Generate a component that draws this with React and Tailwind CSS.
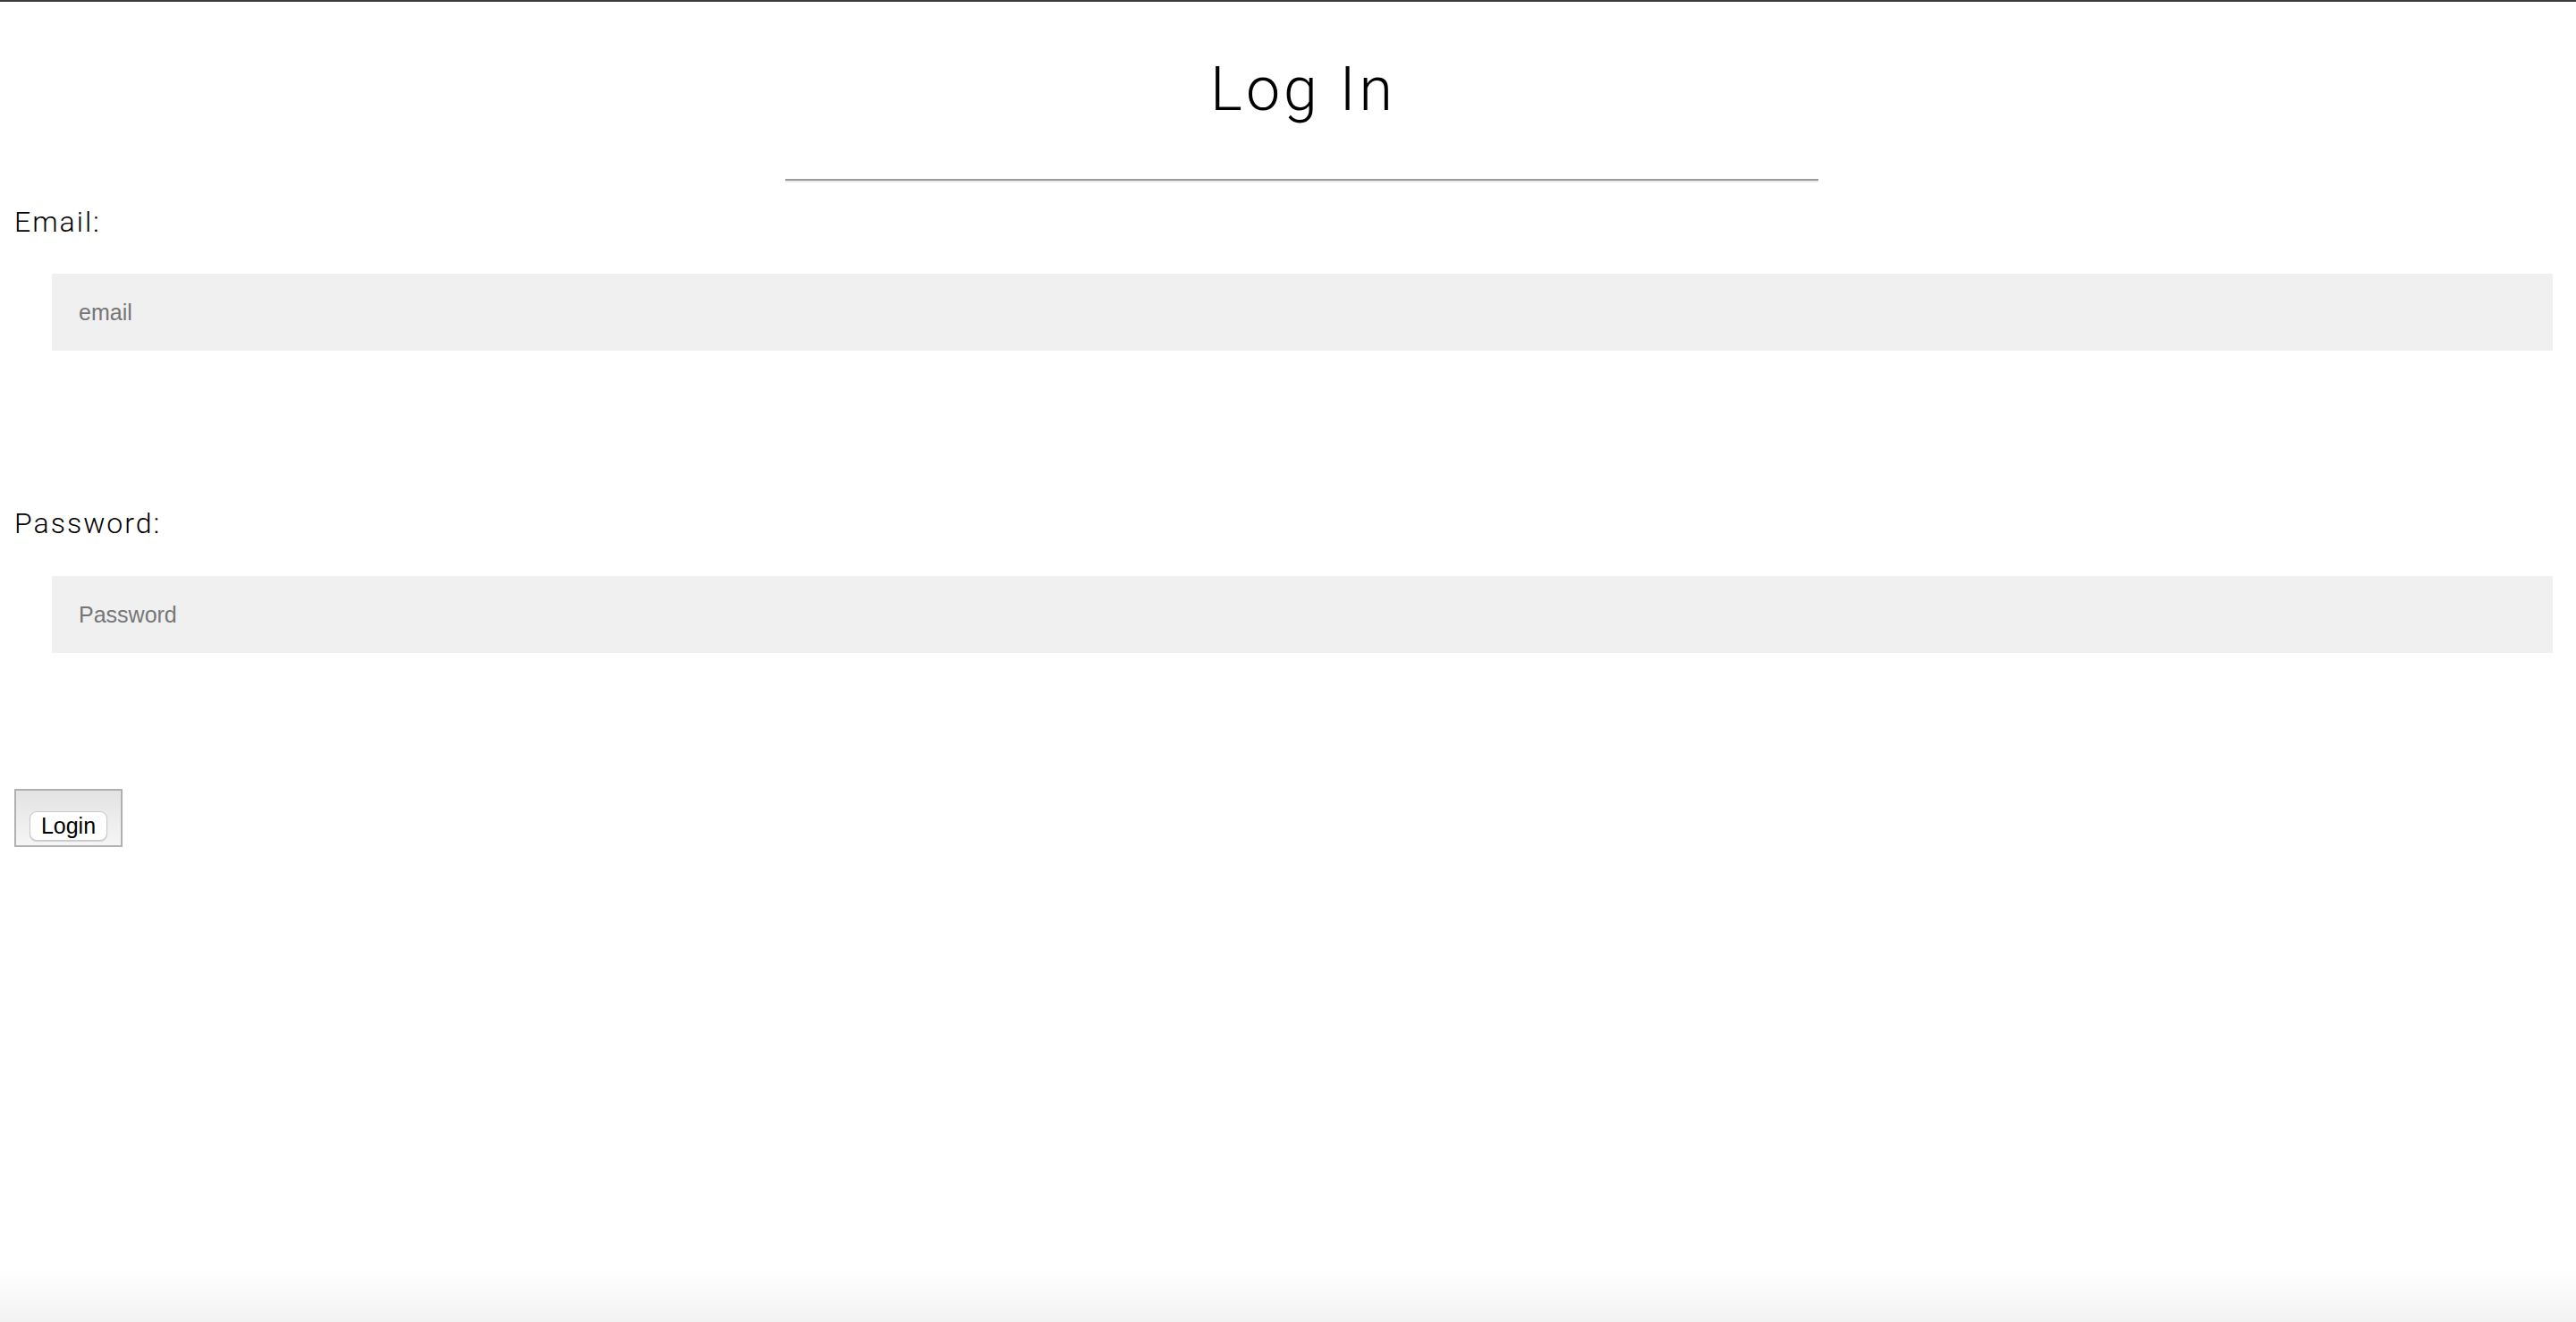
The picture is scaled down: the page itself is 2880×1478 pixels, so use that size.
export default function App() {
  return (
    <div className="min-h-[1478px] flex flex-col bg-white">
      {/* top rule */}
      <div className="h-[2px] bg-[#3c3c3c]" />

      <div className="pl-[30px] flex flex-col">
        <h1
          className="mt-[58px] pl-[4px] text-center text-[68px] leading-[80px] font-light tracking-[4px] text-black"
          style={{ fontFamily: "Roboto, 'Liberation Sans', sans-serif" }}
        >
          Log In
        </h1>

        <hr className="mt-[60px] w-[1155px] mx-auto border-0 border-t-2 border-b-2 border-t-[#9a9a9a] border-b-[#ececec]" />
      </div>

      <form className="pl-4 flex flex-col" onSubmit={(e) => e.preventDefault()}>
        <label
          className="mt-[25px] text-[32px] leading-[38px] font-light tracking-[2px] text-black"
          style={{ fontFamily: "Roboto, 'Liberation Sans', sans-serif" }}
        >
          Email:
        </label>
        <input
          type="email"
          placeholder="email"
          className="mt-[39px] ml-[42px] mr-[26px] h-[86px] bg-[#f0f0f0] pl-[30px] text-[25px] text-black placeholder-[#767676] outline-none"
          style={{ fontFamily: "'Liberation Sans', Arial, sans-serif" }}
        />

        <label
          className="mt-[174px] text-[32px] leading-[38px] font-light tracking-[2px] text-black"
          style={{ fontFamily: "Roboto, 'Liberation Sans', sans-serif" }}
        >
          Password:
        </label>
        <input
          type="password"
          placeholder="Password"
          className="mt-[40px] ml-[42px] mr-[26px] h-[86px] bg-[#f0f0f0] pl-[30px] text-[25px] text-black placeholder-[#767676] outline-none"
          style={{ fontFamily: "'Liberation Sans', Arial, sans-serif" }}
        />

        <div className="mt-[152px] w-[121px] h-[65px] border-2 border-[#b0b0b0] bg-gradient-to-b from-[#e3e3e3] to-[#f5f5f5] flex items-end justify-center pb-[5px]">
          <button
            type="submit"
            className="w-[87px] h-[33px] bg-white border border-[#c9c9c9] rounded-[8px] shadow-[0_1px_1px_rgba(0,0,0,0.15)] text-[25px] leading-none text-black"
            style={{ fontFamily: "'Liberation Sans', Arial, sans-serif" }}
          >
            Login
          </button>
        </div>
      </form>

      <div className="flex-1" />
      {/* faint bottom shade */}
      <div className="h-[60px] bg-gradient-to-b from-white to-[#f2f2f2]" />
    </div>
  );
}
